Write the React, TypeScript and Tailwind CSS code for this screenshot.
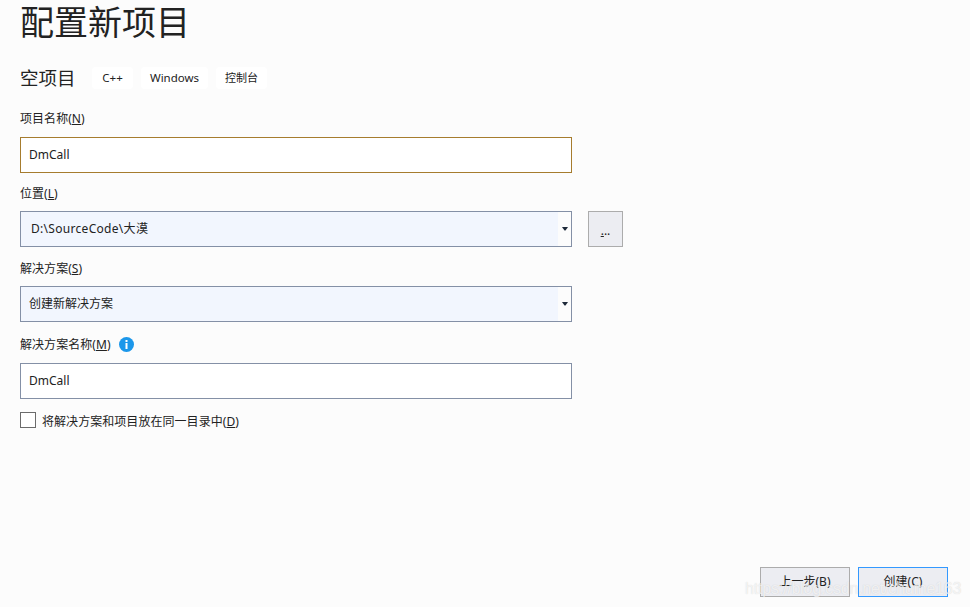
const font = { fontFamily: '"Noto Sans", "Noto Sans CJK SC", sans-serif' };

function Label({ text, k, className = "" }: { text: string; k: string; className?: string }) {
  return (
    <div className={`h-[14px] text-[12px] leading-[16px] tracking-[0.05px] text-[#222] ${className}`}>
      {text}(<span className="underline">{k}</span>)
    </div>
  );
}

function Arrow() {
  return (
    <div className="flex h-full w-[13px] items-center justify-center bg-[#fcfcfc]">
      <svg width="6" height="4" viewBox="0 0 6 4">
        <path d="M0 0h6L3.5 3.5h-1z" fill="#1e2a3a" />
      </svg>
    </div>
  );
}

function Chip({ children, className = "" }: { children: string; className?: string }) {
  return (
    <div className={`flex h-[22px] items-center justify-center rounded-[4px] bg-white text-[#222] ${className}`}>
      {children}
    </div>
  );
}

export default function App() {
  return (
    <div
      className="relative flex h-[607px] w-[970px] flex-col overflow-hidden bg-[#fcfcfc] pl-5"
      style={font}
    >
      <div className="h-[42px] pt-px text-[34px] leading-[42px] text-[#222]">配置新项目</div>
      <div className="mt-[25px] flex h-[22px] items-center gap-2">
        <div className="w-[64px] text-[18.5px] text-[#222]">空项目</div>
        <Chip className="w-[41px] text-[11.5px]">C++</Chip>
        <Chip className="w-[67px] text-[11.5px]">Windows</Chip>
        <Chip className="w-[51px] text-[11px]">控制台</Chip>
      </div>
      <Label text="项目名称" k="N" className="mt-[22px]" />
      <div className="mt-3 flex h-9 w-[552px] items-center border border-[#a67c2e] bg-white pl-2 text-[12px] text-[#222]">
        DmCall
      </div>
      <Label text="位置" k="L" className="mt-[13px]" />
      <div className="mt-[11px] flex items-center">
        <div className="flex h-9 w-[552px] items-center justify-between border border-[#8490a6] bg-[#f2f6fe] text-[12px] text-[#222]">
          <span className="pl-[10px] tracking-[0.3px]">D:\SourceCode\大漠</span>
          <Arrow />
        </div>
        <div className="ml-4 flex h-9 w-[35px] items-center justify-center border border-[#acacac] bg-[#ecedf2] pt-1 text-[12px] text-[#222]">
          <span><span className="underline">.</span>..</span>
        </div>
      </div>
      <Label text="解决方案" k="S" className="mt-[14px]" />
      <div className="mt-[11px] flex h-9 w-[552px] items-center justify-between border border-[#8490a6] bg-[#f2f6fe] text-[12px] text-[#222]">
        <span className="pl-2">创建新解决方案</span>
        <Arrow />
      </div>
      <div className="mt-[15px] flex h-[14px] items-center gap-2">
        <Label text="解决方案名称" k="M" />
        <svg width="15" height="15" viewBox="0 0 15 15">
          <circle cx="7.5" cy="7.5" r="7.5" fill="#1c97ea" />
          <rect x="6.5" y="3" width="2" height="2" fill="#fff" />
          <rect x="6.5" y="6" width="2" height="6" fill="#fff" />
        </svg>
      </div>
      <div className="mt-3 flex h-9 w-[552px] items-center border border-[#8490a6] bg-white pl-2 text-[12px] text-[#222]">
        DmCall
      </div>
      <div className="mt-3 flex items-center gap-[6px]">
        <div className="h-4 w-4 border border-[#6b6b6b] bg-white" />
        <Label text="将解决方案和项目放在同一目录中" k="D" className="mt-[3px]" />
      </div>
      <div className="mt-auto mb-[10px] mr-[22px] flex justify-end gap-2">
        <div className="flex h-[30px] w-[90px] items-center justify-center border border-[#acacac] bg-[#ecedf2] text-[12px] text-[#222]">
          上一步(B)
        </div>
        <div className="flex h-[30px] w-[90px] items-center justify-center border border-[#3399ff] bg-[#ecedf2] text-[12px] text-[#222]">
          创建(C)
        </div>
      </div>
      <div
        className="absolute left-[745px] top-[578px] whitespace-nowrap text-[16px] leading-[22px] tracking-[-0.2px] text-white/70 [text-shadow:0_0_1px_rgba(150,150,150,0.4)]"
        style={{ fontFamily: '"Liberation Sans", sans-serif' }}
      >
        https://blog.csdn.net/chufne163
      </div>
    </div>
  );
}
